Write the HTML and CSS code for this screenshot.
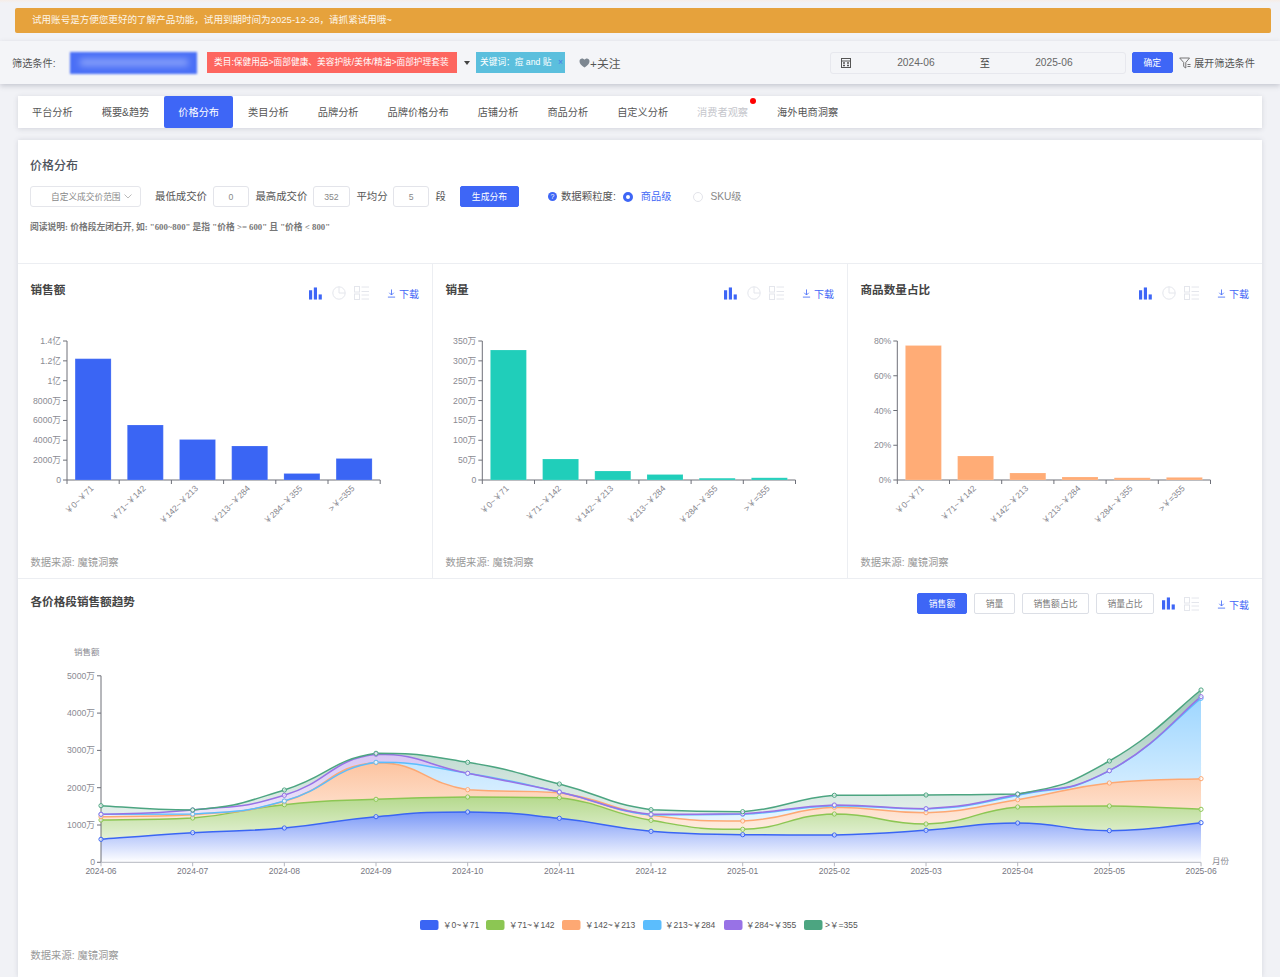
FILE: index.html
```html
<!DOCTYPE html>
<html lang="zh-CN">
<head>
<meta charset="utf-8">
<title>价格分布</title>
<link rel="stylesheet" href="styles.css">
</head>
<body>
<svg class="sprites" width="0" height="0" aria-hidden="true">
  <symbol id="i-bar" viewBox="0 0 14 13"><rect x="0" y="3" width="3.4" height="10"/><rect x="5.200" y="0" width="3.4" height="13"/><rect x="10.400" y="7.500" width="3.4" height="5.500"/></symbol>
  <symbol id="i-pie" viewBox="0 0 14 14"><circle cx="7" cy="7" r="6.2"/><path d="M7 .8V7H13.2"/></symbol>
  <symbol id="i-list" viewBox="0 0 15 14"><rect x=".5" y=".5" width="5" height="5.5"/><rect x=".5" y="8" width="5" height="5.5"/><path d="M7.5 1H15M7.5 5.500H15M7.5 9H15M7.500 13H15"/></symbol>
  <symbol id="i-down" viewBox="0 0 10 10"><path d="M5 .5V6.500M2.500 4.200L5 6.700L7.500 4.200M1 9H9"/></symbol>
</svg>

<div class="alert">试用账号是方便您更好的了解产品功能，试用到期时间为2025-12-28，请抓紧试用哦~</div>

<div class="filterbar">
  <span class="filter-label">筛选条件:</span>
  <div class="blurred"><span class="blurred-text"></span></div>
  <span class="tag tag-red">类目:保健用品&gt;面部健康、美容护肤/美体/精油&gt;面部护理套装</span>
  <span class="caret"></span>
  <span class="tag tag-cyan">关键词：痘 and 贴<i class="tag-x">×</i></span>
  <span class="follow">
    <svg class="heart" viewBox="0 0 12 11"><path d="M6 10.500C2.500 8 .5 6 .5 3.500C.5 1.500 2 .5 3.300 .5C4.500 .5 5.500 1.200 6 2C6.500 1.200 7.500 .5 8.700 .5C10 .5 11.500 1.500 11.500 3.500C11.500 6 9.500 8 6 10.500Z"/></svg>+关注
  </span>
  <div class="spacer"></div>
  <div class="daterange">
    <svg class="cal" viewBox="0 0 10 10"><rect x=".5" y=".5" width="9" height="9"/><path d="M.5 3H9.500"/><path class="cal-dots" d="M2 5H4M6 5H8M2 7.500H4M6 7.500H8"/></svg>
    <span class="date date-from">2024-06</span>
    <span class="date-sep">至</span>
    <span class="date date-to">2025-06</span>
  </div>
  <button class="btn btn-primary btn-ok">确定</button>
  <span class="expand">
    <svg class="funnel" viewBox="0 0 12 12"><path d="M.7 1H10.500L6.800 5.500V11L4.700 9.500V5.500Z"/><path d="M8.500 7.500H11.500M8.500 9.500H11.500"/></svg>展开筛选条件
  </span>
</div>

<nav class="tabs">
  <a class="tab">平台分析</a>
  <a class="tab">概要&amp;趋势</a>
  <a class="tab tab-active">价格分布</a>
  <a class="tab">类目分析</a>
  <a class="tab">品牌分析</a>
  <a class="tab">品牌价格分布</a>
  <a class="tab">店铺分析</a>
  <a class="tab">商品分析</a>
  <a class="tab">自定义分析</a>
  <a class="tab tab-disabled">消费者观察<i class="dot"></i></a>
  <a class="tab">海外电商洞察</a>
</nav>

<main class="card">
  <section class="controls">
    <h2 class="section-title">价格分布</h2>
    <div class="control-row">
      <div class="select">自定义成交价范围<svg class="chev" viewBox="0 0 8 5"><path d="M.5 .5L4 4L7.500 .5"/></svg></div>
      <span class="lbl lbl-first">最低成交价</span><span class="num num-a num-first">0</span>
      <span class="lbl">最高成交价</span><span class="num num-b">352</span>
      <span class="lbl">平均分</span><span class="num num-a">5</span>
      <span class="lbl">段</span>
      <button class="btn btn-primary btn-gen">生成分布</button>
      <span class="help">?</span>
      <span class="lbl lbl-gran">数据颗粒度:</span>
      <span class="radio radio-on"></span><span class="radio-text radio-text-on">商品级</span>
      <span class="radio"></span><span class="radio-text">SKU级</span>
    </div>
    <p class="note">阅读说明: 价格段左闭右开, 如: "600~800" 是指 "价格 &gt;= 600" 且 "价格 &lt; 800"</p>
  </section>

  <section class="chart-grid">
    <article class="chart-col">
      <header class="chart-head">
        <h3 class="chart-title">销售额</h3>
        <div class="tools">
          <svg class="ic ic-bar"><use href="#i-bar"/></svg>
          <svg class="ic ic-pie"><use href="#i-pie"/></svg>
          <svg class="ic ic-list"><use href="#i-list"/></svg>
          <span class="dl"><svg class="ic-down"><use href="#i-down"/></svg>下载</span>
        </div>
      </header>
      <svg class="bar-chart" id="bar1" viewBox="0 0 414 220"></svg>
      <footer class="source">数据来源: 魔镜洞察</footer>
    </article>
    <article class="chart-col">
      <header class="chart-head">
        <h3 class="chart-title">销量</h3>
        <div class="tools">
          <svg class="ic ic-bar"><use href="#i-bar"/></svg>
          <svg class="ic ic-pie"><use href="#i-pie"/></svg>
          <svg class="ic ic-list"><use href="#i-list"/></svg>
          <span class="dl"><svg class="ic-down"><use href="#i-down"/></svg>下载</span>
        </div>
      </header>
      <svg class="bar-chart" id="bar2" viewBox="0 0 414 220"></svg>
      <footer class="source">数据来源: 魔镜洞察</footer>
    </article>
    <article class="chart-col">
      <header class="chart-head">
        <h3 class="chart-title">商品数量占比</h3>
        <div class="tools">
          <svg class="ic ic-bar"><use href="#i-bar"/></svg>
          <svg class="ic ic-pie"><use href="#i-pie"/></svg>
          <svg class="ic ic-list"><use href="#i-list"/></svg>
          <span class="dl"><svg class="ic-down"><use href="#i-down"/></svg>下载</span>
        </div>
      </header>
      <svg class="bar-chart" id="bar3" viewBox="0 0 414 220"></svg>
      <footer class="source">数据来源: 魔镜洞察</footer>
    </article>
  </section>

  <section class="trend">
    <header class="trend-head">
      <h3 class="trend-title">各价格段销售额趋势</h3>
      <div class="trend-tools">
        <button class="btn btn-primary btn-seg seg-a">销售额</button>
        <button class="btn btn-seg seg-b">销量</button>
        <button class="btn btn-seg seg-c">销售额占比</button>
        <button class="btn btn-seg seg-d">销量占比</button>
        <svg class="ic ic-bar ic-bar-trend"><use href="#i-bar"/></svg>
        <svg class="ic ic-list"><use href="#i-list"/></svg>
        <span class="dl"><svg class="ic-down"><use href="#i-down"/></svg>下载</span>
      </div>
    </header>
    <svg class="line-chart" id="line" viewBox="0 0 1244 290"></svg>
    <footer class="source source-trend">数据来源: 魔镜洞察</footer>
  </section>
</main>
<script src="charts.js"></script>
</body>
</html>
```

FILE: styles.css
```css
* { box-sizing: border-box; }
html, body { margin: 0; height: 977px; overflow: hidden; }
body {
  background: linear-gradient(#f6ede7, #f1f2f6 3px);
  font-family: "Liberation Sans", "Noto Sans CJK SC", sans-serif;
  font-size: 10.2px;
  color: #444;
}
.sprites { position: absolute; }

.alert {
  margin: 8px 9px 8px 15px;
  height: 25px;
  line-height: 24px;
  padding-left: 17px;
  background: #e6a23c;
  border-radius: 2px;
  color: #fdf6ea;
  font-size: 9.55px;
}

.filterbar {
  height: 43px;
  display: flex;
  align-items: center;
  padding: 0 25px 0 12px;
  background: #f4f5f8;
  box-shadow: 0 2px 5px rgba(90, 95, 115, .28);
}
.filter-label { width: 58px; color: #555; }
.blurred {
  width: 127px; height: 22px;
  background: #4a6ff6;
  filter: blur(.8px);
  display: flex; align-items: center; justify-content: center;
  overflow: hidden;
}
.blurred-text {
  display: block; width: 108px; height: 7px;
  background: #8ba3fa;
  filter: blur(3px);
}
.tag {
  height: 21px; line-height: 20px;
  color: #fff;
  font-size: 8.7px;
  white-space: nowrap;
}
.tag-red { margin-left: 10px; width: 250px; padding-left: 7px; background: #fd665f; }
.caret {
  margin-left: 7px;
  border-left: 3.5px solid transparent;
  border-right: 3.5px solid transparent;
  border-top: 4.5px solid #444;
}
.tag-cyan { margin-left: 6px; width: 89px; padding-left: 4px; background: #5bbfdd; position: relative; }
.tag-x { font-style: normal; color: #4a78e8; position: absolute; right: 2px; top: 0; }
.follow { margin-left: 14px; display: flex; align-items: center; color: #555; font-size: 11.8px; }
.heart { width: 11px; height: 10px; fill: #7d8791; }
.spacer { flex: 1; }

.daterange {
  width: 296px; height: 22px;
  display: flex; align-items: center;
  border: 1px solid #e7e8ee;
  border-radius: 3px;
  background: #f4f5f8;
  padding-left: 10px;
  color: #666;
  font-size: 10.2px;
}
.cal { width: 10px; height: 10px; fill: none; stroke: #555; }
.cal-dots { stroke-width: 1.6; }
.date { text-align: center; }
.date-from { width: 122px; margin-left: 4px; }
.date-sep { width: 16px; color: #444; text-align: center; font-size: 10.2px; }
.date-to { width: 122px; }

.btn {
  font: inherit;
  border: 1px solid #dcdfe6;
  background: #fff;
  color: #777;
  border-radius: 2px;
  padding: 0;
  font-size: 8.8px;
}
.btn-primary { background: #3e66f6; border-color: #3e66f6; color: #fff; }
.btn-ok { margin-left: 6px; width: 41px; height: 21px; }
.expand { margin-left: 6px; display: flex; align-items: center; color: #555; gap: 3px; }
.funnel { width: 12px; height: 12px; fill: none; stroke: #666; stroke-width: .9; }

.tabs {
  margin: 12px 18px 12px 18px;
  height: 32px;
  display: flex;
  gap: 1px;
  background: #fff;
  box-shadow: 0 1px 5px rgba(90, 95, 115, .2);
}
.tab {
  padding: 0 14px;
  line-height: 33px;
  color: #555;
  position: relative;
  white-space: nowrap;
  font-size: 10.2px;
}
.tab-active { background: #3e66f6; color: #fff; border-radius: 2px; }
.tab-disabled { color: #c6c7cd; }
.dot {
  position: absolute; top: 2px; right: 6px;
  width: 6px; height: 6px; border-radius: 50%;
  background: #f00;
}

.card {
  margin: 0 18px;
  background: #fff;
  height: 837px;
  box-shadow: 0 0 5px rgba(90, 95, 115, .18);
}

.controls {
  height: 124px;
  padding: 18px 12px 0;
  border-bottom: 1px solid #eceef2;
}
.section-title { margin: 0; font-size: 12px; line-height: 16px; font-weight: 500; color: #4d535c; }
.control-row { margin-top: 12px; height: 21px; display: flex; align-items: center; }
.select {
  width: 111px; height: 21px;
  border: 1px solid #e5e6eb; border-radius: 3px;
  padding-left: 20px;
  display: flex; align-items: center; justify-content: flex-start;
  font-size: 8.7px; color: #888;
  white-space: nowrap;
}
.chev { width: 8px; height: 5px; margin-left: 3px; fill: none; stroke: #bbb; }
.lbl { color: #555; white-space: nowrap; font-size: 10.4px; line-height: 19px; }
.lbl-first { margin-left: 14px; }
.num {
  height: 21px; margin: 0 6.5px 0 5.5px;
  border: 1px solid #e3e4ea; border-radius: 3px;
  display: flex; align-items: center; justify-content: center;
  font-size: 8.7px; color: #888;
}
.num-a { width: 36px; }
.num-b { width: 37px; }
.num-first { margin-left: 6px; }
.btn-gen { margin-left: 14px; width: 59px; height: 21px; }
.help {
  margin-left: 29px; width: 9px; height: 9px; border-radius: 50%;
  background: #3e66f6; color: #fff; font-size: 7px; line-height: 9px; text-align: center;
}
.lbl-gran { margin-left: 4px; }
.radio {
  margin-left: 7px; width: 10px; height: 10px; border-radius: 50%;
  border: 1px solid #e3e4ea; background: #fff;
}
.radio-on { margin-left: 7px; border: 3px solid #3e66f6; }
.radio-text { margin-left: 7px; color: #888; font-size: 10.2px; line-height: 19px; }
.radio-text-on { margin-left: 8px; margin-right: 15px; color: #3e66f6; }
.note {
  margin: 14px 0 0;
  font-family: "Liberation Serif", "Noto Sans CJK SC", serif;
  font-size: 8.78px; line-height: 12px; font-weight: 700; color: #777;
}

.chart-grid {
  display: grid;
  grid-template-columns: 415px 415px 414px;
  height: 315px;
  border-bottom: 1px solid #eceef2;
}
.chart-col { display: flex; flex-direction: column; border-right: 1px solid #eceef2; }
.chart-col:last-child { border-right: 0; }
.chart-head {
  height: 66px;
  display: flex; justify-content: space-between; align-items: flex-start;
  padding: 17px 13px 0 12.5px;
}
.chart-title { margin: 0; font-size: 11.6px; line-height: 17px; font-weight: 700; color: #444; }
.tools { display: flex; align-items: center; margin-top: 5px; height: 14px; }
.ic { display: block; }
.ic-bar { width: 13px; height: 13px; fill: #3e66f6; }
.ic-pie { width: 14px; height: 14px; margin-left: 10px; fill: none; stroke: #e4e6ec; }
.ic-list { width: 15px; height: 14px; margin-left: 8px; fill: none; stroke: #e4e6ec; }
.dl { margin-left: 18px; display: flex; align-items: center; color: #3e66f6; gap: 3px; font-size: 10px; }
.ic-down { width: 9px; height: 9px; fill: none; stroke: #3e66f6; stroke-width: .9; }
.bar-chart { display: block; width: 414px; height: 220px; }
.source { padding-left: 12.5px; font-size: 10.3px; line-height: 26px; color: #999; }

.trend { display: flex; flex-direction: column; }
.trend-head {
  height: 61px;
  display: flex; justify-content: space-between; align-items: flex-start;
  padding: 14px 13px 0 12.5px;
}
.trend-title { margin: 0; font-size: 11.6px; line-height: 17px; font-weight: 700; color: #444; }
.trend-tools { display: flex; align-items: center; height: 21px; }
.btn-seg { height: 21px; margin-right: 7px; }
.seg-a { width: 50px; }
.seg-b { width: 41px; }
.seg-c { width: 67px; }
.seg-d { width: 58px; margin-right: 8px; }
.ic-bar-trend { margin-right: 1px; }
.trend-tools .dl { margin-top: 2px; }
.line-chart { display: block; width: 1244px; height: 290px; }
.source-trend { line-height: 14px; margin-top: 19px; }

.ax { stroke: #6e7079; stroke-width: 1; fill: none; }
.ax-light { stroke: #b5b7c0; }
.yl { font-size: 8.7px; fill: #8a8a92; text-anchor: end; }
.xl { font-size: 8.5px; fill: #85858d; text-anchor: end; }
.xc { font-size: 8.5px; fill: #77777f; text-anchor: middle; }
.an { font-size: 8.5px; fill: #8a8a92; }
.lg { font-size: 8.5px; fill: #555; }
```

FILE: charts.js
```js
var NS = 'http://www.w3.org/2000/svg';
function el(parent, name, attrs, text) {
  var e = document.createElementNS(NS, name);
  for (var k in attrs) e.setAttribute(k, attrs[k]);
  if (text !== undefined) e.textContent = text;
  parent.appendChild(e);
  return e;
}
var CATS = ['￥0~￥71', '￥71~￥142', '￥142~￥213', '￥213~￥284', '￥284~￥355', '>￥=355'];

function barChart(id, color, ticks, tops, axisX) {
  var s = document.getElementById(id);
  var top = 11, bottom = 150, step = 52.2;
  el(s, 'path', { class: 'ax', d: 'M' + axisX + ' ' + top + 'V' + bottom + 'H' + (axisX + step * 6) });
  ticks.forEach(function (t, i) {
    var y = bottom - (bottom - top) * i / (ticks.length - 1);
    el(s, 'path', { class: 'ax', d: 'M' + (axisX - 4) + ' ' + y + 'H' + axisX });
    el(s, 'text', { class: 'yl', x: axisX - 6, y: y + 3 }, t);
  });
  CATS.forEach(function (c, i) {
    var tx = axisX + step * i;
    el(s, 'path', { class: 'ax', d: 'M' + tx + ' ' + bottom + 'v4' });
    var cx = tx + step / 2;
    el(s, 'rect', { x: cx - 18, y: tops[i] - 330, width: 36, height: bottom - (tops[i] - 330), fill: color, stroke: '#fff', 'stroke-opacity': .15 });
    el(s, 'text', { class: 'xl', x: cx + 1, y: bottom + 9, transform: 'rotate(-45 ' + (cx + 1) + ' ' + (bottom + 9) + ')' }, c);
  });
  el(s, 'path', { class: 'ax', d: 'M' + (axisX + step * 6) + ' ' + bottom + 'v4' });
}
barChart('bar1', '#3a65f4', ['0', '2000万', '4000万', '6000万', '8000万', '1亿', '1.2亿', '1.4亿'],
  [358.7, 425, 439.5, 446, 473.5, 458.5], 49);
barChart('bar2', '#20ceba', ['0', '50万', '100万', '150万', '200万', '250万', '300万', '350万'],
  [350, 459, 471, 474.5, 478.2, 477.8], 49.3);
barChart('bar3', '#ffac76', ['0%', '20%', '40%', '60%', '80%'],
  [345.5, 456, 473, 477, 477.8, 477.4], 49.3);

/* Trend chart: y values are stored as page pixel rows measured from the axis. */
var MONTHS = ['2024-06', '2024-07', '2024-08', '2024-09', '2024-10', '2024-11', '2024-12',
  '2025-01', '2025-02', '2025-03', '2025-04', '2025-05', '2025-06'];
var SERIES = [
  { name: CATS[0], color: '#3a65f4', top: '#7a98f7', y: [839.3, 832.7, 828, 816.7, 812, 818.3, 831.3, 834.7, 835, 830.3, 823, 830.7, 822.7] },
  { name: CATS[1], color: '#8cc653', top: '#b5d98d', y: [820, 818, 804.7, 799.3, 797, 797.7, 820.3, 829.3, 814, 824, 807, 806, 809.3] },
  { name: CATS[2], color: '#fda873', top: '#fdc4a0', y: [816.7, 814.7, 801.3, 762.7, 789.7, 792.7, 815.3, 821, 807.3, 812.7, 799.7, 783, 778.7] },
  { name: CATS[3], color: '#5bbdfd', top: '#9ed6ff', y: [814.3, 814, 801, 762.3, 773.3, 792, 815, 814.3, 805.7, 809, 795.3, 770.7, 698.3] },
  { name: CATS[4], color: '#9872e6', top: '#c3a8ee', y: [814.3, 810, 795.3, 754.3, 773.3, 792, 814.3, 813.7, 805, 808.7, 794.3, 770.7, 696.7] },
  { name: CATS[5], color: '#4ca581', top: '#9dc7b7', y: [805.7, 810, 790, 753.3, 762.3, 784, 809.7, 811.7, 795.3, 795, 794, 761, 690] }
];
var PAGE_TOP = 640, LEFT = 83, STEP = 91.67;
function px(i) { return LEFT + STEP * i; }
function py(v) { return v - PAGE_TOP; }
function clamp(v, a, b) { return Math.max(Math.min(a, b), Math.min(Math.max(a, b), v)); }

/* Smooth line: control points are kept within the y range of their segment, so peaks stay flat. */
function smooth(ys) {
  var pts = ys.map(function (v, i) { return [px(i), py(v)]; });
  var d = 'M' + pts[0][0] + ' ' + pts[0][1];
  for (var i = 0; i < pts.length - 1; i++) {
    var a = pts[i], b = pts[i + 1];
    var p = pts[i - 1] || a, n = pts[i + 2] || b;
    var c1 = [a[0] + (b[0] - p[0]) * 0.25, clamp(a[1] + (b[1] - p[1]) * 0.25, a[1], b[1])];
    var c2 = [b[0] - (n[0] - a[0]) * 0.25, clamp(b[1] - (n[1] - a[1]) * 0.25, a[1], b[1])];
    d += 'C' + c1[0].toFixed(1) + ' ' + c1[1].toFixed(1) + ' ' + c2[0].toFixed(1) + ' ' + c2[1].toFixed(1) + ' ' + b[0].toFixed(1) + ' ' + b[1].toFixed(1);
  }
  return d;
}

(function lineChart() {
  var s = document.getElementById('line');
  var base = py(862.3), unit = 37.3;
  var defs = el(s, 'defs', {});
  SERIES.forEach(function (o, i) {
    var g = el(defs, 'linearGradient', { id: 'g' + i, x1: 0, y1: 0, x2: 0, y2: 1 });
    el(g, 'stop', { offset: 0, 'stop-color': o.top });
    el(g, 'stop', { offset: 1, 'stop-color': '#fff' });
  });
  for (var i = SERIES.length - 1; i >= 0; i--) {
    el(s, 'path', { d: smooth(SERIES[i].y) + 'L' + px(12) + ' ' + base + 'L' + px(0) + ' ' + base + 'Z', fill: 'url(#g' + i + ')' });
  }
  el(s, 'path', { class: 'ax', d: 'M' + LEFT + ' ' + py(675.8) + 'V' + base });
  el(s, 'path', { class: 'ax ax-light', d: 'M' + LEFT + ' ' + base + 'H' + px(12) });
  ['0', '1000万', '2000万', '3000万', '4000万', '5000万'].forEach(function (t, i) {
    var y = base - unit * i;
    el(s, 'path', { class: 'ax', d: 'M' + (LEFT - 4) + ' ' + y + 'H' + LEFT });
    el(s, 'text', { class: 'yl', x: LEFT - 6, y: y + 3 }, t);
  });
  MONTHS.forEach(function (m, i) {
    el(s, 'path', { class: 'ax ax-light', d: 'M' + px(i) + ' ' + base + 'v4' });
    el(s, 'text', { class: 'xc', x: px(i), y: base + 12 }, m);
  });
  el(s, 'text', { class: 'an', x: 56, y: 15 }, '销售额');
  el(s, 'text', { class: 'an', x: px(12) + 11, y: base + 2 }, '月份');

  SERIES.forEach(function (o) {
    el(s, 'path', { d: smooth(o.y), fill: 'none', stroke: o.color, 'stroke-width': 1.5 });
  });
  SERIES.forEach(function (o) {
    o.y.forEach(function (v, i) {
      el(s, 'circle', { cx: px(i), cy: py(v), r: 2.1, fill: '#fff', 'fill-opacity': .6, stroke: o.color, 'stroke-width': 1 });
    });
  });

  var legend = [[402, 425], [468, 491], [544, 567], [625, 647], [706, 728], [786, 807]];
  SERIES.forEach(function (o, i) {
    el(s, 'rect', { x: legend[i][0], y: py(920), width: 18.5, height: 10, rx: 2, fill: o.color });
    el(s, 'text', { class: 'lg', x: legend[i][1], y: py(927.5) }, o.name);
  });
})();
```
